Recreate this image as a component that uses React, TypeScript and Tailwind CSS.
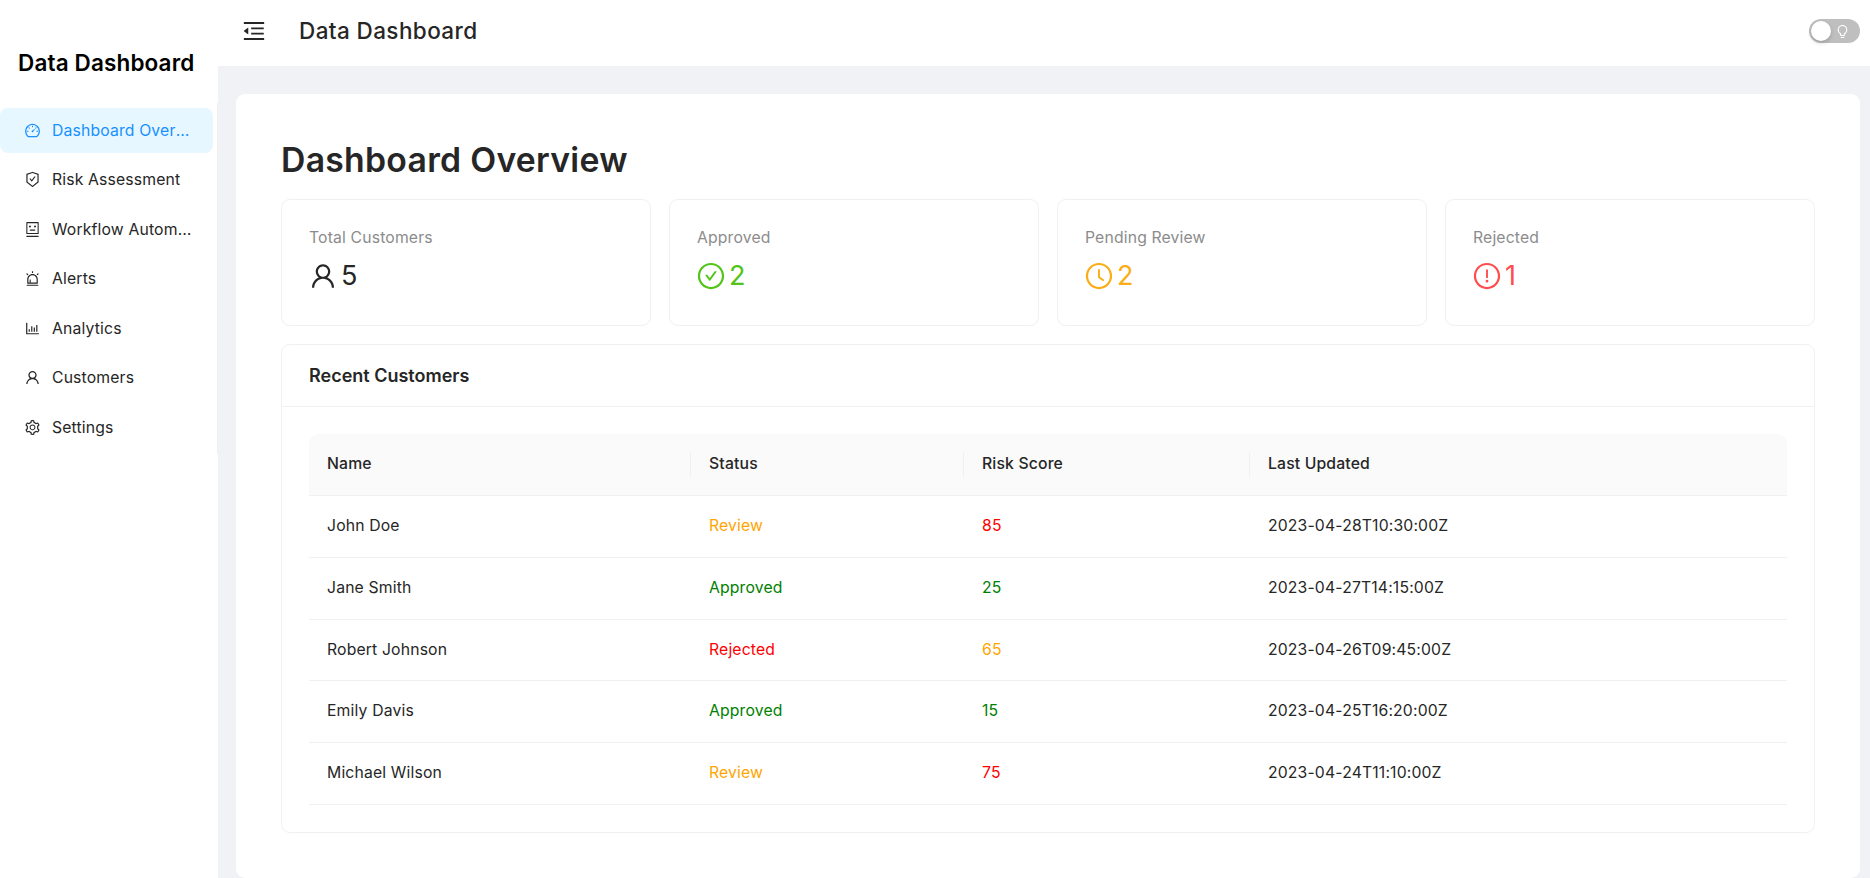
import {
  AiOutlineAlert,
  AiOutlineBarChart,
  AiOutlineBulb,
  AiOutlineCheckCircle,
  AiOutlineClockCircle,
  AiOutlineDashboard,
  AiOutlineExclamationCircle,
  AiOutlineMenuFold,
  AiOutlineRobot,
  AiOutlineSafetyCertificate,
  AiOutlineSetting,
  AiOutlineUser,
} from "react-icons/ai";

const menu = [
  { label: "Dashboard Overview", icon: AiOutlineDashboard, active: true },
  { label: "Risk Assessment", icon: AiOutlineSafetyCertificate },
  { label: "Workflow Automation", icon: AiOutlineRobot },
  { label: "Alerts", icon: AiOutlineAlert },
  { label: "Analytics", icon: AiOutlineBarChart },
  { label: "Customers", icon: AiOutlineUser },
  { label: "Settings", icon: AiOutlineSetting },
];

const stats = [
  { label: "Total Customers", value: "5", icon: AiOutlineUser, color: "text-[#262626]" },
  { label: "Approved", value: "2", icon: AiOutlineCheckCircle, color: "text-[#52c41a]" },
  { label: "Pending Review", value: "2", icon: AiOutlineClockCircle, color: "text-[#faad14]" },
  { label: "Rejected", value: "1", icon: AiOutlineExclamationCircle, color: "text-[#ff4d4f]" },
];

const columns = [
  { label: "Name", width: "w-[382px]" },
  { label: "Status", width: "w-[273px]" },
  { label: "Risk Score", width: "w-[286px]" },
  { label: "Last Updated", width: "" },
];

const rows = [
  { name: "John Doe", status: "Review", statusColor: "text-[#ffa500]", score: "85", scoreColor: "text-[#ff0000]", updated: "2023-04-28T10:30:00Z" },
  { name: "Jane Smith", status: "Approved", statusColor: "text-[#008000]", score: "25", scoreColor: "text-[#008000]", updated: "2023-04-27T14:15:00Z" },
  { name: "Robert Johnson", status: "Rejected", statusColor: "text-[#ff0000]", score: "65", scoreColor: "text-[#ffa500]", updated: "2023-04-26T09:45:00Z" },
  { name: "Emily Davis", status: "Approved", statusColor: "text-[#008000]", score: "15", scoreColor: "text-[#008000]", updated: "2023-04-25T16:20:00Z" },
  { name: "Michael Wilson", status: "Review", statusColor: "text-[#ffa500]", score: "75", scoreColor: "text-[#ff0000]", updated: "2023-04-24T11:10:00Z" },
];

export default function App() {
  return (
    <div className="flex h-[878px] overflow-hidden bg-[#f0f2f5] font-['Inter',sans-serif] text-[15.75px] tracking-[0.15px] text-[#262626]">
      <aside className="w-[218px] shrink-0 bg-white">
        <div className="h-[103px] pt-[46px] pl-[18px] text-[22.5px] leading-[34px] font-semibold tracking-[0.14px] text-black">Data Dashboard</div>
        <nav className="flex flex-col gap-[4.5px] border-r border-[#f0f0f0] py-[4.5px]">
          {menu.map((item) => (
            <div
              key={item.label}
              className={`mr-[4px] flex h-[45px] items-center rounded-[8px] pr-[20px] pl-[24px] ${item.active ? "bg-[#e6f7ff] text-[#1890ff]" : "text-[#262626]"}`}
            >
              <item.icon className="h-[17px] w-[17px] shrink-0" />
              <span className="ml-[11px] truncate pt-[1px]">{item.label}</span>
            </div>
          ))}
        </nav>
      </aside>
      <div className="flex min-w-0 flex-1 flex-col">
        <header className="flex h-[66px] shrink-0 items-center bg-white pr-[10px] pb-[4px] pl-[23px]">
          <AiOutlineMenuFold className="h-[26px] w-[26px] text-[#262626]" />
          <div className="ml-[32px] text-[22.5px] font-medium tracking-[0.4px] text-[#262626]">Data Dashboard</div>
          <div className="ml-auto flex h-[24px] w-[51px] items-center justify-between rounded-full bg-[#bfbfbf] px-[2px]">
            <span className="h-[20px] w-[20px] rounded-full bg-white shadow-[0_2px_4px_rgba(0,35,11,0.2)]" />
            <AiOutlineBulb className="mr-[8px] h-[15px] w-[15px] text-white" />
          </div>
        </header>
        <main className="mt-[28px] mr-[10px] ml-[18px] flex-1 rounded-[9px] bg-white px-[45px] pt-[44px]">
          <h1 className="text-[33.75px] leading-[44px] font-semibold tracking-[0.27px] text-[#262626]">Dashboard Overview</h1>
          <div className="mt-[17px] grid grid-cols-4 gap-[18px]">
            {stats.map((stat) => (
              <div key={stat.label} className="h-[127px] rounded-[9px] border border-[#f0f0f0] px-[27px] pt-[27px]">
                <div className="leading-[22px] text-[#8c8c8c]">{stat.label}</div>
                <div className={`mt-[11px] -ml-[1px] flex items-center gap-[3px] text-[27px] leading-[32px] ${stat.color}`}>
                  <stat.icon className="h-[30px] w-[30px]" />
                  <span>{stat.value}</span>
                </div>
              </div>
            ))}
          </div>
          <section className="mt-[18px] rounded-[9px] border border-[#f0f0f0]">
            <div className="flex h-[62px] items-center border-b border-[#f0f0f0] px-[27px] text-[18px] font-semibold tracking-normal">Recent Customers</div>
            <div className="p-[27px]">
              <table className="w-full border-collapse text-left">
                <thead>
                  <tr className="h-[61.7px] border-b border-[#f0f0f0] bg-[#fafafa]">
                    {columns.map((col, i) => (
                      <th key={col.label} className={`relative pb-[2px] pl-[18px] font-medium ${col.width} ${i === 0 ? "rounded-tl-[9px]" : ""} ${i === 3 ? "rounded-tr-[9px]" : ""}`}>
                        {col.label}
                        {i < 3 && <span className="absolute top-[18px] right-0 h-[25px] w-px bg-[#f0f0f0]" />}
                      </th>
                    ))}
                  </tr>
                </thead>
                <tbody>
                  {rows.map((row) => (
                    <tr key={row.name} className="h-[61.7px] border-b border-[#f0f0f0]">
                      <td className="pb-[1px] pl-[18px]">{row.name}</td>
                      <td className={`pb-[1px] pl-[18px] ${row.statusColor}`}>{row.status}</td>
                      <td className={`pb-[1px] pl-[18px] ${row.scoreColor}`}>{row.score}</td>
                      <td className="pb-[1px] pl-[18px]">{row.updated}</td>
                    </tr>
                  ))}
                </tbody>
              </table>
            </div>
          </section>
        </main>
      </div>
    </div>
  );
}
